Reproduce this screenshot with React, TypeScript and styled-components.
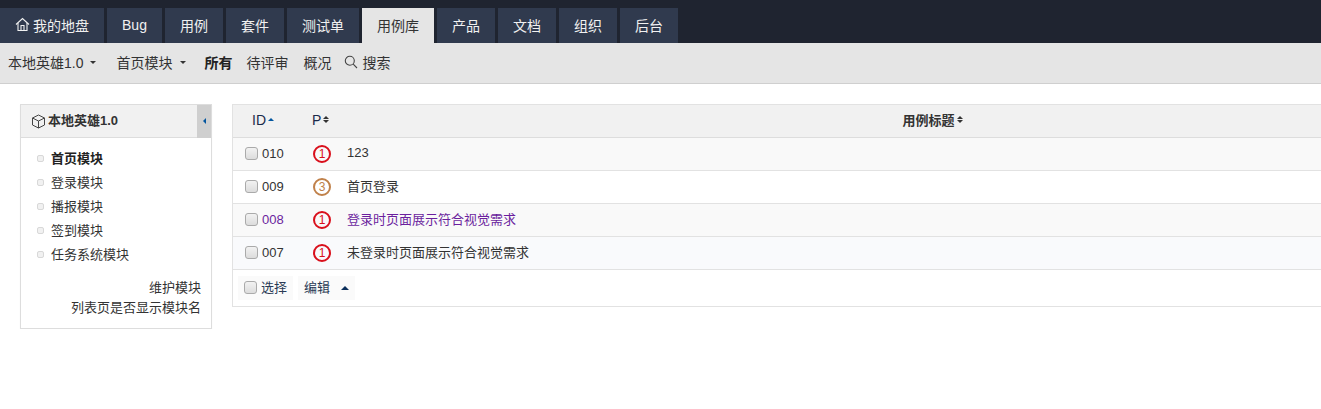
import React from 'react';
import styled, { createGlobalStyle } from 'styled-components';

const GlobalStyle = createGlobalStyle`
  html, body {
    margin: 0;
    padding: 0;
    background: #fff;
    overflow: hidden;
  }
  * { box-sizing: border-box; }
  body {
    font-family: "Liberation Sans", "Noto Sans CJK SC", sans-serif;
    font-size: 13px;
    color: #333;
  }
`;

const TopBar = styled.div`
  background: #1f2430;
  height: 43px;
  padding-top: 8px;
  display: flex;
  gap: 3px;
`;

const Tab = styled.a<{ $active?: boolean; $width: number }>`
  width: ${p => p.$width}px;
  height: 35px;
  padding-bottom: 2px;
  display: flex;
  align-items: center;
  justify-content: center;
  gap: 3px;
  font-size: 14px;
  background: ${p => (p.$active ? '#e5e5e5' : '#303a4e')};
  color: ${p => (p.$active ? '#333' : '#f1f1f1')};
`;

const SubNav = styled.div`
  height: 41px;
  background: #e5e5e5;
  border-bottom: 1px solid #cfcfcf;
  padding: 0 0 2px 8px;
  display: flex;
  align-items: center;
  font-size: 14px;
`;

const SubItem = styled.a<{ $bold?: boolean; $gap: number }>`
  display: flex;
  align-items: center;
  margin-right: ${p => p.$gap}px;
  font-weight: ${p => (p.$bold ? 700 : 400)};
  color: ${p => (p.$bold ? '#222' : '#333')};
`;

const Caret = styled.span<{ $up?: boolean; $color?: string; $size?: number; $left?: number }>`
  display: inline-block;
  width: 0;
  height: 0;
  margin-left: ${p => p.$left ?? 6}px;
  border-left: ${p => p.$size ?? 3}px solid transparent;
  border-right: ${p => p.$size ?? 3}px solid transparent;
  ${p => (p.$up ? 'border-bottom' : 'border-top')}: ${p => p.$size ?? 3}px solid ${p => p.$color ?? '#333'};
`;

const Content = styled.div`
  display: flex;
  align-items: flex-start;
  gap: 20px;
  padding: 20px 0 0 20px;
`;

const SidePanel = styled.aside`
  width: 192px;
  height: 225px;
  flex: none;
  background: #fff;
  border: 1px solid #ddd;
  box-shadow: 0 1px 1px rgba(0, 0, 0, 0.05);
  display: flex;
  flex-direction: column;
`;

const SideHead = styled.div`
  height: 33px;
  flex: none;
  display: flex;
  align-items: center;
  background: #f1f1f1;
  border-bottom: 1px solid #ddd;
  padding-left: 10px;
  gap: 2px;
  font-weight: 700;
  color: #333;
`;

const SideTitle = styled.span`
  flex: 1;
  padding-bottom: 4px;
`;

const Collapse = styled.span`
  width: 14px;
  height: 33px;
  background: #cfcfcf;
  display: flex;
  align-items: center;
  justify-content: center;
`;

const LeftCaret = styled.span`
  width: 0;
  height: 0;
  border-top: 3px solid transparent;
  border-bottom: 3px solid transparent;
  border-right: 3px solid #03569f;
`;

const Tree = styled.ul`
  list-style: none;
  margin: 0;
  padding: 9px 0 0 16px;
`;

const TreeRow = styled.li<{ $bold?: boolean }>`
  height: 24px;
  display: flex;
  align-items: center;
  gap: 7px;
  font-weight: ${p => (p.$bold ? 700 : 400)};
  color: ${p => (p.$bold ? '#222' : '#333')};
`;

const TreeLabel = styled.span`
  padding-bottom: 3px;
`;

const Bullet = styled.span`
  width: 7px;
  height: 7px;
  margin-bottom: 2px;
  background: #f1f1f1;
  border: 1px solid #d8d8d8;
  border-radius: 2px;
`;

const SideLinks = styled.div`
  margin-top: 11px;
  padding-right: 10px;
  text-align: right;
  line-height: 20px;
`;

const Main = styled.main`
  flex: 1;
  min-width: 0;
  overflow: hidden;
`;

const Table = styled.div`
  width: 1296px;
  border: 1px solid #e2e2e2;
`;

const HeadRow = styled.div`
  height: 33px;
  display: grid;
  grid-template-columns: 70px 35px 1fr;
  align-items: center;
  background: #f1f1f1;
  border-bottom: 1px solid #ddd;
  font-weight: 700;
  color: #333;
`;

const HeadCell = styled.div<{ $center?: boolean; $left?: number }>`
  display: flex;
  align-items: center;
  justify-content: ${p => (p.$center ? 'center' : 'flex-start')};
  padding-left: ${p => p.$left ?? 0}px;
  padding-bottom: 3px;
`;

const ShortHead = styled.span`
  font-size: 14px;
  font-weight: 400;
  color: #1a2a4a;
`;

const SortBoth = styled.span`
  display: inline-flex;
  flex-direction: column;
  gap: 1px;
  margin-left: 2px;
`;

const Row = styled.div<{ $bg: string; $visited?: boolean }>`
  height: 33px;
  display: grid;
  grid-template-columns: 70px 35px 1fr;
  align-items: center;
  background: ${p => p.$bg};
  border-bottom: 1px solid #e2e2e2;
  color: ${p => (p.$visited ? '#6b1f9e' : '#333')};
`;

const IdCell = styled.div`
  display: flex;
  align-items: center;
  gap: 4px;
  padding-left: 12px;
`;

const IdText = styled.span`
  padding-bottom: 2px;
`;

const Check = styled.span`
  width: 13px;
  height: 13px;
  flex: none;
  margin-bottom: 2px;
  background: linear-gradient(#f2f2f2, #dcdcdc);
  border: 1px solid #aaa;
  border-radius: 3px;
`;

const PriCell = styled.div`
  padding-left: 10px;
`;

const Pri = styled.span<{ $color: string }>`
  display: flex;
  align-items: center;
  justify-content: center;
  width: 18px;
  height: 18px;
  border: 2px solid ${p => p.$color};
  border-radius: 50%;
  font-size: 12px;
  line-height: 1;
  color: ${p => p.$color};
`;

const TitleCell = styled.div`
  padding: 0 0 3px 9px;
`;

const Foot = styled.div`
  height: 36px;
  display: flex;
  align-items: center;
  padding-left: 5px;
  gap: 5px;
`;

const FootBtn = styled.a`
  height: 24px;
  display: flex;
  align-items: center;
  gap: 4px;
  padding: 0 6px;
  background: #fafafa;
  color: #2b3a55;
`;

const FootLabel = styled.span`
  padding-bottom: 3px;
`;

const HomeIcon = () => (
  <svg width="15" height="15" viewBox="0 0 15 15" fill="none" stroke="#f1f1f1" strokeWidth="1.1">
    <path d="M1 7.5 7.5 1.5 14 7.5" />
    <path d="M3 6v7.5h9V6" />
    <path d="M6 13.5V8.5h3v5" />
  </svg>
);

const SearchIcon = () => (
  <svg width="14" height="14" viewBox="0 0 14 14" fill="none" stroke="#444" strokeWidth="1.1" style={{ marginRight: 4 }}>
    <circle cx="5.8" cy="5.8" r="4.5" />
    <path d="M9.2 9.2 13 13" />
  </svg>
);

const CubeIcon = () => (
  <svg width="15" height="15" viewBox="0 0 15 15" fill="none" stroke="#444" strokeWidth="1">
    <path d="M7.5 1 13.5 4v7l-6 3-6-3V4z" />
    <path d="M1.5 4l6 3 6-3M7.5 7v7" />
  </svg>
);

const tabs = [
  { label: '我的地盘', width: 104, home: true },
  { label: 'Bug', width: 55 },
  { label: '用例', width: 58 },
  { label: '套件', width: 58 },
  { label: '测试单', width: 72 },
  { label: '用例库', width: 72, active: true },
  { label: '产品', width: 58 },
  { label: '文档', width: 58 },
  { label: '组织', width: 58 },
  { label: '后台', width: 58 },
];

const modules = ['首页模块', '登录模块', '播报模块', '签到模块', '任务系统模块'];

const cases = [
  { id: '010', pri: 1, title: '123', bg: '#f9f9f9' },
  { id: '009', pri: 3, title: '首页登录', bg: '#fff' },
  { id: '008', pri: 1, title: '登录时页面展示符合视觉需求', bg: '#f9f9f9', visited: true },
  { id: '007', pri: 1, title: '未登录时页面展示符合视觉需求', bg: '#f9fafc' },
];

const priColors: Record<number, string> = { 1: '#d9101c', 3: '#c0814a' };

const App: React.FC = () => (
  <>
    <GlobalStyle />
    <TopBar>
      {tabs.map(t => (
        <Tab key={t.label} $width={t.width} $active={t.active}>
          {t.home && <HomeIcon />}
          {t.label}
        </Tab>
      ))}
    </TopBar>
    <SubNav>
      <SubItem $gap={20}>本地英雄1.0<Caret $left={7} /></SubItem>
      <SubItem $gap={18}>首页模块<Caret $left={8} /></SubItem>
      <SubItem $gap={14} $bold>所有</SubItem>
      <SubItem $gap={15}>待评审</SubItem>
      <SubItem $gap={13}>概况</SubItem>
      <SubItem $gap={0}><SearchIcon />搜索</SubItem>
    </SubNav>
    <Content>
      <SidePanel>
        <SideHead>
          <CubeIcon />
          <SideTitle>本地英雄1.0</SideTitle>
          <Collapse><LeftCaret /></Collapse>
        </SideHead>
        <Tree>
          {modules.map((m, i) => (
            <TreeRow key={m} $bold={i === 0}>
              <Bullet />
              <TreeLabel>{m}</TreeLabel>
            </TreeRow>
          ))}
        </Tree>
        <SideLinks>
          <div>维护模块</div>
          <div>列表页是否显示模块名</div>
        </SideLinks>
      </SidePanel>
      <Main>
        <Table>
          <HeadRow>
            <HeadCell $left={19}>
              <ShortHead>ID</ShortHead>
              <Caret $up $color="#03569f" $size={3} $left={2} />
            </HeadCell>
            <HeadCell $left={9}>
              <ShortHead>P</ShortHead>
              <SortBoth>
                <Caret $up $left={0} />
                <Caret $left={0} />
              </SortBoth>
            </HeadCell>
            <HeadCell $center>
              用例标题
              <SortBoth>
                <Caret $up $left={0} />
                <Caret $left={0} />
              </SortBoth>
            </HeadCell>
          </HeadRow>
          {cases.map(c => (
            <Row key={c.id} $bg={c.bg} $visited={c.visited}>
              <IdCell><Check /><IdText>{c.id}</IdText></IdCell>
              <PriCell><Pri $color={priColors[c.pri]}>{c.pri}</Pri></PriCell>
              <TitleCell>{c.title}</TitleCell>
            </Row>
          ))}
          <Foot>
            <FootBtn><Check /><FootLabel>选择</FootLabel></FootBtn>
            <FootBtn>
              <FootLabel>编辑</FootLabel>
              <Caret $up $color="#0b2f5b" $size={4} $left={7} />
            </FootBtn>
          </Foot>
        </Table>
      </Main>
    </Content>
  </>
);

export default App;
